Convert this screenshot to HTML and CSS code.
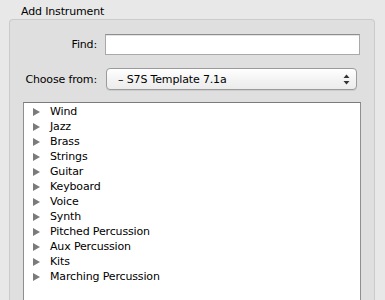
FILE: index.html
```html
<!DOCTYPE html>
<html>
<head>
<meta charset="utf-8">
<link rel="stylesheet" href="styles.css">
</head>
<body>
<div class="title">Add Instrument</div>
<div class="group">
  <div class="form">
    <label class="label">Find:</label>
    <div class="input"></div>
    <label class="label">Choose from:</label>
    <div class="select">
      <span class="select-text">– S7S Template 7.1a</span>
      <svg class="updown" width="7" height="11" viewBox="0 0 7 11"><path d="M3.5 0.5 L6.5 4 L0.5 4 Z" fill="#333"/><path d="M0.5 7 L6.5 7 L3.5 10.5 Z" fill="#333"/></svg>
    </div>
  </div>
  <div class="list">
    <div class="row"><span class="tri"></span>Wind</div>
    <div class="row"><span class="tri"></span>Jazz</div>
    <div class="row"><span class="tri"></span>Brass</div>
    <div class="row"><span class="tri"></span>Strings</div>
    <div class="row"><span class="tri"></span>Guitar</div>
    <div class="row"><span class="tri"></span>Keyboard</div>
    <div class="row"><span class="tri"></span>Voice</div>
    <div class="row"><span class="tri"></span>Synth</div>
    <div class="row"><span class="tri"></span>Pitched Percussion</div>
    <div class="row"><span class="tri"></span>Aux Percussion</div>
    <div class="row"><span class="tri"></span>Kits</div>
    <div class="row"><span class="tri"></span>Marching Percussion</div>
  </div>
</div>
</body>
</html>
```
FILE: styles.css
```css
html, body {
  margin: 0;
  padding: 0;
  height: 300px;
  overflow: hidden;
  background: #e8e8e8;
  font-family: "DejaVu Sans", sans-serif;
  font-size: 11px;
  letter-spacing: -0.15px;
  color: #000;
}
.title {
  padding: 5px 0 0 21px;
  height: 14px;
  line-height: 13px;
}
.group {
  margin: 0 10px 0 9px;
  height: 281px;
  background: #dfdfdf;
  border: 1px solid #cbcbcb;
  border-bottom: none;
  border-radius: 4px 4px 0 0;
  box-sizing: border-box;
  padding: 14px 13px 0 0;
  overflow: hidden;
}
.form {
  display: grid;
  grid-template-columns: 87px 1fr;
  column-gap: 8px;
  row-gap: 13px;
  align-items: center;
}
.label {
  text-align: right;
}
.input {
  height: 21px;
  margin-right: 1px;
  background: #fff;
  border: 1px solid #a9a9a9;
  border-top-color: #8e8e8e;
  box-shadow: inset 0 1px 0 #e4e4e4;
  box-sizing: border-box;
}
.select {
  height: 22px;
  margin-left: 1px;
  margin-right: 4px;
  box-sizing: border-box;
  border: 1px solid #9b9b9b;
  border-radius: 4px;
  background: linear-gradient(#ffffff, #f2f2f2 60%, #ececec);
  box-shadow: 0 1px 0 rgba(0,0,0,0.08);
  display: flex;
  align-items: center;
  justify-content: space-between;
  padding: 0 6px 0 11px;
}
.updown {
  display: block;
}
.list {
  margin: 12px 0 0 13px;
  height: 200px;
  background: #fff;
  border: 1px solid #8f8f8f;
  border-top-color: #7a7a7a;
  border-bottom: none;
  box-sizing: border-box;
  padding-top: 1px;
}
.row {
  height: 15px;
  line-height: 15px;
  display: flex;
  align-items: center;
  padding-left: 9px;
}
.tri {
  width: 0;
  height: 0;
  border-top: 4px solid transparent;
  border-bottom: 4px solid transparent;
  border-left: 7px solid #7b7b7b;
  margin-right: 10px;
}
```
